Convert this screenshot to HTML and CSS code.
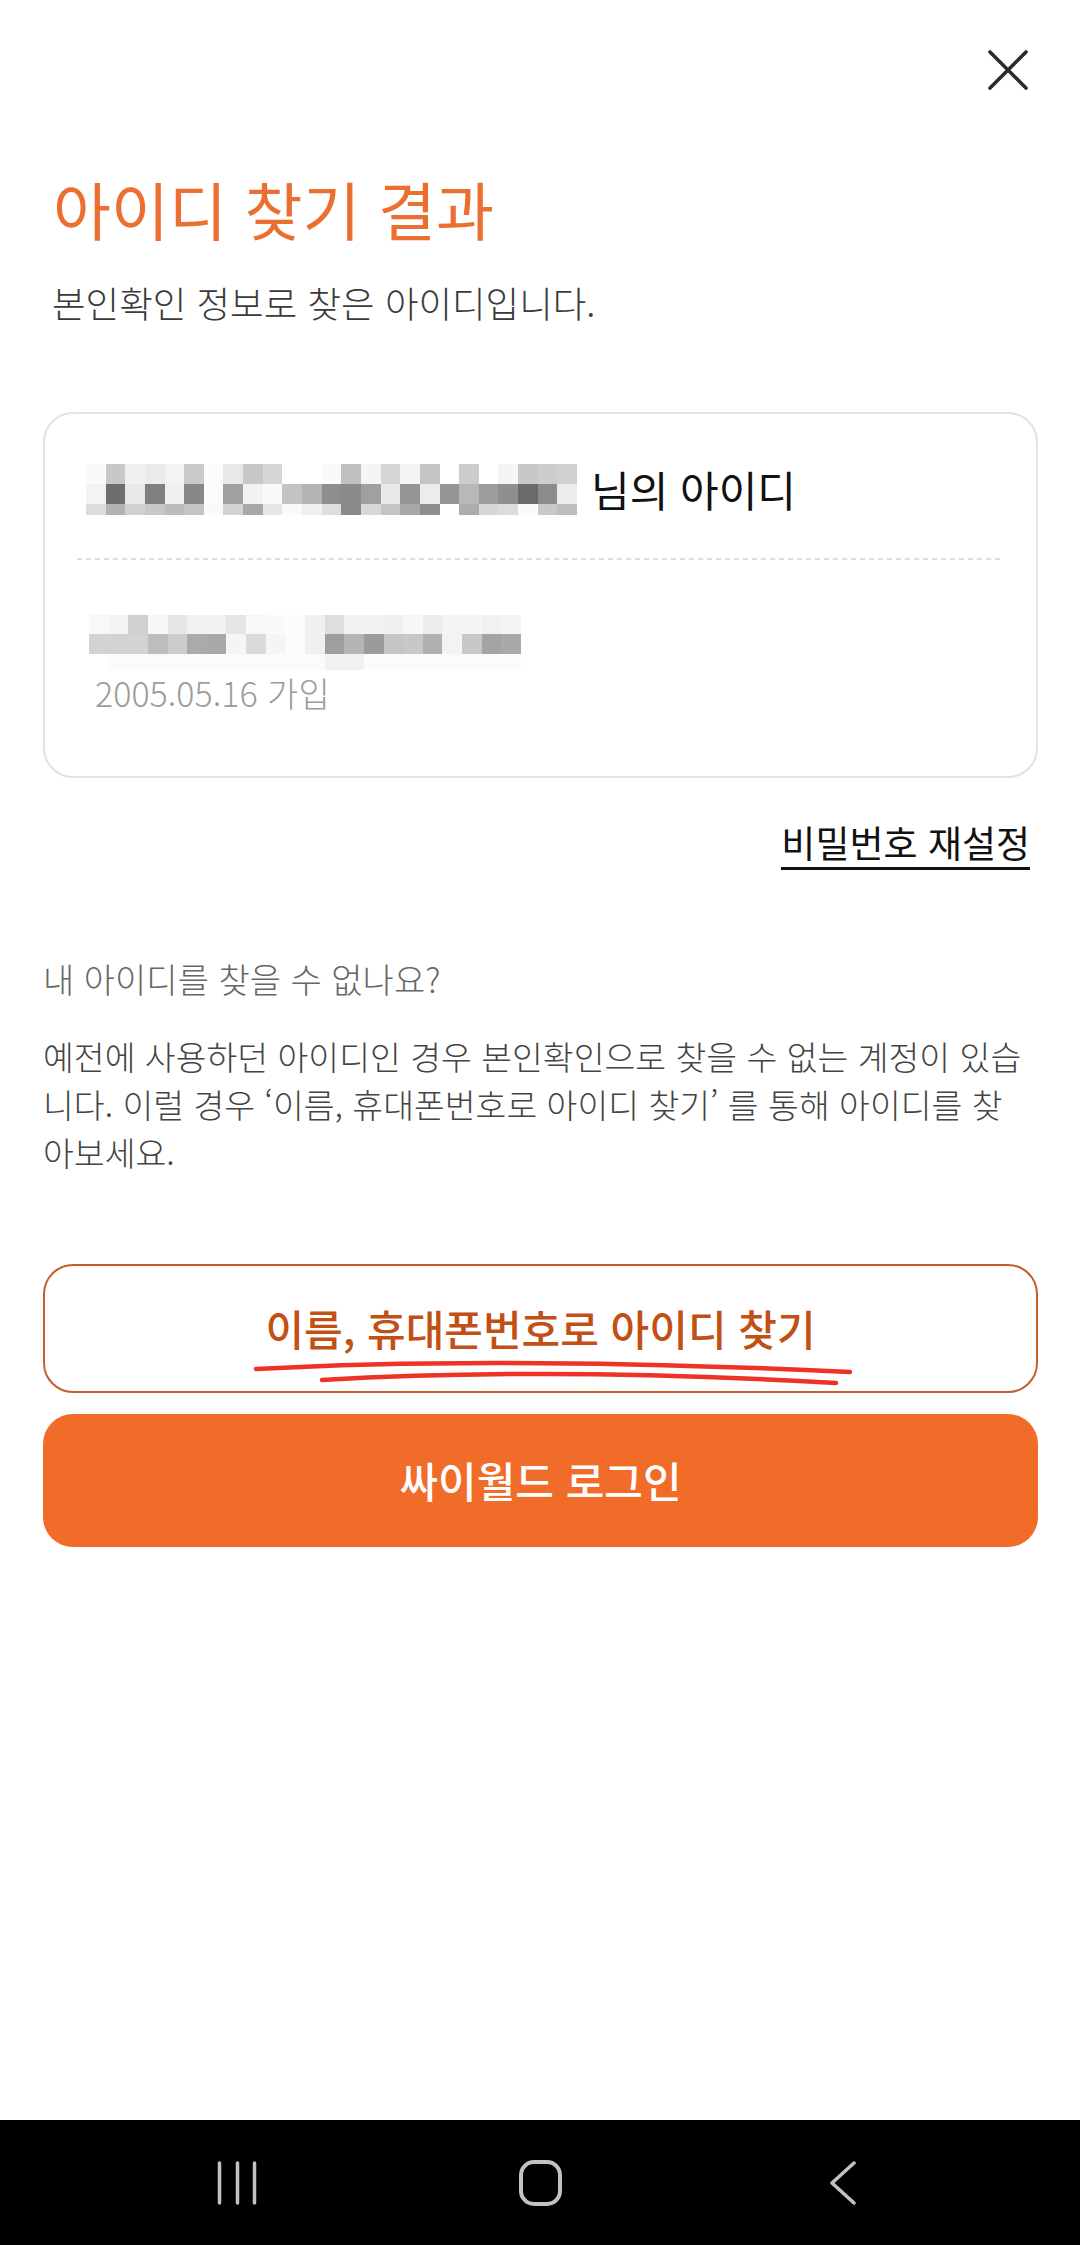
FILE: index.html
```html
<!DOCTYPE html>
<html lang="ko">
<head>
    <meta charset="utf-8">
    <title>아이디 찾기 결과</title>
    <link rel="stylesheet" href="styles.css">
</head>
<body>
<div class="screen">
    <div class="content">
        <div class="top-bar">
            <button class="close-btn" aria-label="닫기">
                <svg width="40" height="40" viewBox="0 0 40 40">
                    <path d="M2 2 L38 38 M38 2 L2 38" stroke="#2b2b2b" stroke-width="3.6" stroke-linecap="round" fill="none"/>
                </svg>
            </button>
        </div>

        <h1 class="title">아이디 찾기 결과</h1>
        <p class="subtitle">본인확인 정보로 찾은 아이디입니다.</p>

        <div class="result-card">
            <div class="name-row">
                <div class="mosaic mosaic-name" data-cells="fa c8 f0 eb f3 ca fc e8 c8 d6 ff ff fa c0 f5 d5 f5 c5 ff cc ff f5 c8 cc d0|f3 6e e8 80 f0 88 fc a0 f2 fa c3 b3 8e 8a a0 e8 96 ec 95 b8 9c 8f 6a 8c ec|dc b2 d0 c8 bc c4 fa d3 a8 e6 fa f0 de 8a d8 c5 a8 8e ff ac d6 dc fa c8 bd"></div>
                <span class="name-suffix">님의 아이디</span>
            </div>
            <div class="divider"></div>
            <div class="id-row">
                <div class="mosaic mosaic-id" data-cells="f8 f3 d0 f7 e5 f2 f2 e6 f8 fa fc f0 de f2 f2 ef f7 ec f5 f5 f1 f3|d3 d3 d3 bd cc ab a8 f5 da f5 fc ef 9e b5 9b c5 c8 b0 f3 c8 a3 a9|ff fb fb fb fb fb fb fb fb fb fb fb f2 f2 fb fb fb fb fb fb fb fb"></div>
                <div class="join-date">2005.05.16 가입</div>
            </div>
        </div>

        <div class="link-row">
            <a class="reset-link" href="#">비밀번호 재설정</a>
        </div>

        <p class="help-title">내 아이디를 찾을 수 없나요?</p>
        <p class="help-text">예전에 사용하던 아이디인 경우 본인확인으로 찾을 수 없는 계정이 있습<br>니다. 이럴 경우 ‘이름, 휴대폰번호로 아이디 찾기’ 를 통해 아이디를 찾<br>아보세요.</p>

        <div class="btn btn-outline">
            이름, 휴대폰번호로 아이디 찾기
            <svg class="scribble" viewBox="0 0 991 125">
                <path d="M211 103 Q454 89.5 805 106" />
                <path d="M277 114 Q508 100.5 791 117" />
            </svg>
        </div>
        <div class="btn btn-fill">싸이월드 로그인</div>
    </div>

    <div class="nav-bar">
        <div class="nav-item">
            <svg width="40" height="44" viewBox="0 0 40 44">
                <path d="M2.5 2 V42 M20.5 2 V42 M37.5 2 V42" />
            </svg>
        </div>
        <div class="nav-item">
            <svg width="43" height="46" viewBox="0 0 43 46">
                <rect x="2" y="2" width="39" height="42" rx="13" />
            </svg>
        </div>
        <div class="nav-item">
            <svg width="26" height="44" viewBox="0 0 26 44">
                <polyline points="24,2 2,22 24,42" />
            </svg>
        </div>
    </div>
</div>

<script>
    // build the blurred mosaic blocks from the gray values
    document.querySelectorAll('.mosaic').forEach(function (box) {
        box.dataset.cells.split('|').forEach(function (row) {
            row.trim().split(' ').forEach(function (g) {
                var cell = document.createElement('span');
                cell.style.background = '#' + g + g + g;
                box.appendChild(cell);
            });
        });
    });
</script>
</body>
</html>
```

FILE: styles.css
```css
html, body {
    margin: 0;
    padding: 0;
    background-color: #fff;
}

body {
    font-family: "Noto Sans CJK KR", "Noto Sans", sans-serif;
    color: #333;
}

.screen {
    width: 1080px;
    min-height: 2245px;
    display: flex;
    flex-direction: column;
}

.content {
    flex: 1;
    padding: 0 42px 0 43px;
}

.top-bar {
    display: flex;
    justify-content: flex-end;
    padding: 50px 10px 0 0;
}

.close-btn {
    display: block;
    height: 40px;
    padding: 0;
    border: none;
    background: none;
}

.close-btn svg {
    display: block;
}

.title {
    margin: 86px 0 0 10px;
    font-size: 63px;
    line-height: 1;
    font-weight: 400;
    color: #eb6f31;
}

.subtitle {
    margin: 46px 0 0 9px;
    font-size: 36.5px;
    line-height: 1;
    font-weight: 300;
    color: #3a3a3a;
}

/* result card */
.result-card {
    margin-top: 90px;
    border: 2px solid #e2e2e2;
    border-radius: 30px;
    padding: 50px 32px 66px;
}

.name-row {
    display: flex;
    align-items: center;
    padding-left: 9px;
}

.mosaic {
    display: grid;
}

.mosaic-name {
    width: 491px;
    grid-template-columns: repeat(25, 1fr);
    grid-template-rows: 20px 20px 11px;
}

.mosaic-id {
    width: 432px;
    grid-template-columns: repeat(22, 1fr);
    grid-template-rows: 19px 20px 16px;
}

.name-suffix {
    margin-left: 14px;
    font-size: 42px;
    line-height: 1;
    color: #111;
}

.divider {
    margin-top: 43px;
    height: 2px;
    background: repeating-linear-gradient(to right, #dedede 0 5px, transparent 5px 9px);
}

.id-row {
    margin-top: 55px;
    padding-left: 12px;
}

.join-date {
    margin: 6px 0 0 6px;
    font-size: 34px;
    line-height: 1;
    font-weight: 300;
    color: #9c9c9c;
}

.link-row {
    display: flex;
    justify-content: flex-end;
    margin-top: 46px;
    padding-right: 8px;
}

.reset-link {
    display: block;
    padding-bottom: 6px;
    border-bottom: 3px solid #111;
    font-size: 37px;
    line-height: 1;
    color: #111;
    text-decoration: none;
}

.help-title {
    margin: 92px 0 0;
    font-size: 34px;
    line-height: 1;
    font-weight: 300;
    color: #666;
}

.help-text {
    margin: 36px 0 0;
    font-size: 33.5px;
    line-height: 48px;
    font-weight: 300;
    color: #444;
}

/* buttons */
.btn {
    box-sizing: border-box;
    display: flex;
    align-items: center;
    justify-content: center;
    border-radius: 30px;
    font-size: 42px;
    line-height: 1;
    font-weight: 500;
}

.btn-outline {
    position: relative;
    margin-top: 88px;
    height: 129px;
    border: 2px solid #c4602a;
    color: #c24f14;
}

.btn-fill {
    margin-top: 21px;
    height: 133px;
    background-color: #f26c29;
    color: #fff;
}

.scribble {
    position: absolute;
    left: 0;
    top: 0;
    width: 991px;
    height: 125px;
    overflow: visible;
}

.scribble path {
    fill: none;
    stroke: #ee3224;
    stroke-width: 4.5;
    stroke-linecap: round;
}

/* system navigation bar */
.nav-bar {
    height: 125px;
    background-color: #000;
    display: flex;
    justify-content: center;
    align-items: center;
    gap: 203px;
}

.nav-item {
    width: 100px;
    display: flex;
    justify-content: center;
}

.nav-item svg {
    display: block;
    fill: none;
    stroke: #c2c2c2;
    stroke-width: 3.5;
    stroke-linecap: round;
    stroke-linejoin: round;
}

.nav-item rect {
    stroke-width: 4;
}
```
